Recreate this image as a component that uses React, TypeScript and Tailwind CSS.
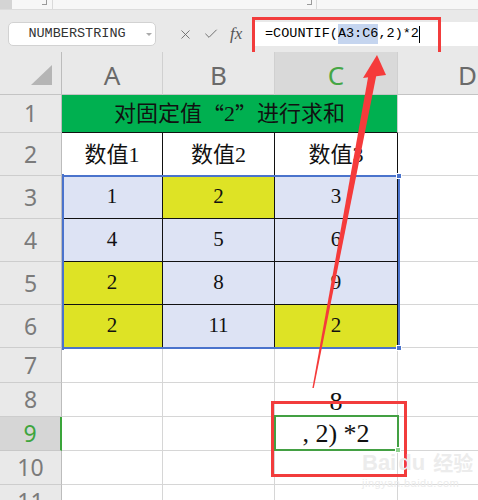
import React from 'react';
import { X, Check } from 'lucide-react';

const SERIF = "font-['Liberation_Serif','Noto_Sans_CJK_SC',serif]";
const MONO = "font-['Liberation_Mono','DejaVu_Sans_Mono',monospace]";

const BLUE = 'bg-[#dde3f4]';
const YELLOW = 'bg-[#dee325]';

// values for A3:C6
const BODY = [
  [
    { v: '1', bg: BLUE },
    { v: '2', bg: YELLOW },
    { v: '3', bg: BLUE },
  ],
  [
    { v: '4', bg: BLUE },
    { v: '5', bg: BLUE },
    { v: '6', bg: BLUE },
  ],
  [
    { v: '2', bg: YELLOW },
    { v: '8', bg: BLUE },
    { v: '9', bg: BLUE },
  ],
  [
    { v: '2', bg: YELLOW },
    { v: '11', bg: BLUE },
    { v: '2', bg: YELLOW },
  ],
];

const RowHead = ({ n, active }: { n: number; active?: boolean }) => (
  <div
    className={`flex items-center justify-center border-b text-[23px] font-['Noto_Sans',sans-serif] ${
      active
        ? 'bg-[#d6d6d6] text-[#3ea53e] border-r-2 border-r-[#3aa53a] border-b-[#c8c8c8]'
        : 'bg-[#e9e9e9] text-[#7b7b7b] border-r border-r-[#bcbcbc] border-b-[#cdcdcd]'
    }`}
  >
    {n}
  </div>
);

const Empty = () => <div className="bg-white border-r border-b border-[#d6d6d6]" />;

const ColHead = ({ label, active }: { label: string; active?: boolean }) => (
  <div
    className={`flex items-center justify-center pt-[5px] text-[26px] font-['Noto_Sans',sans-serif] border-r border-b border-r-[#d0d0d0] border-b-[#c4c4c4] ${
      active ? 'bg-[#d9d9d9] text-[#45a645]' : 'bg-[#e9e9e9] text-[#6a6a6a]'
    }`}
  >
    {label}
  </div>
);

const App = () => {
  return (
    <div className="relative w-[478px] h-[500px] overflow-hidden bg-[#e9e9e9]">
      {/* top strip */}
      <div className="relative h-[10px] bg-[#f7f7f7] border-b border-[#dcdcdc]">
        <div className="absolute left-0 top-0 w-[12px] h-[9px] bg-[#d4d4d4]" />
        <div className="absolute left-[42px] top-0 w-[5px] h-[5px] border-r border-b border-[#9a9a9a]" />
        <div className="absolute left-[52px] top-0 w-px h-[9px] bg-[#dadada]" />
        <div className="absolute left-[307px] top-0 w-[5px] h-[5px] border-r border-b border-[#9a9a9a]" />
        <div className="absolute left-[316px] top-0 w-px h-[9px] bg-[#dadada]" />
      </div>

      {/* formula bar */}
      <div className="relative h-[42px] flex items-start pt-[12px] bg-[#e9e9e9]">
        <div className="ml-[8px] w-[148px] h-[24px] bg-white border border-[#d2d2d2] rounded-[5px] flex items-center justify-center pr-[10px] relative">
          <span className={`${MONO} text-[13.5px] text-[#333]`}>NUMBERSTRING</span>
          <div className="absolute right-[3px] top-[10px] w-0 h-0 border-l-[3px] border-r-[3px] border-t-[3px] border-l-transparent border-r-transparent border-t-[#aaa]" />
        </div>
        <div className="w-[98px] h-[24px] flex items-center pl-[22px] text-[#666]">
          <X size={15} strokeWidth={1.4} />
          <Check size={16} strokeWidth={1.4} className="ml-[10px]" />
          <span className="ml-[11px] text-[17px] italic font-['Liberation_Serif',serif] text-[#555]">fx</span>
        </div>
        <div className={`flex-1 h-[24px] bg-white flex items-center pl-[11px] ${MONO} text-[13.5px] text-black`}>
          <span>=COUNTIF(</span>
          <span className="bg-[#c5d5ef]">A3:C6</span>
          <span>,2)*2</span>
          <span className="w-px h-[17px] bg-black" />
        </div>
        {/* red annotation around formula */}
        <div className="absolute left-[252px] top-[7px] w-[189px] h-[39px] border-[3px] border-[#f23c3c]" />
      </div>

      {/* sheet */}
      <div className="relative grid grid-cols-[62px_101px_112px_123px_140px] grid-rows-[43px_38px_43px_43px_43px_43px_43px_35px_34px_34px_34px_34px]">
        {/* column header */}
        <div className="bg-[#e9e9e9] border-r border-b border-r-[#bcbcbc] border-b-[#c4c4c4] flex items-end justify-end pr-[9px] pb-[9px]">
          <svg width="21" height="20" viewBox="0 0 21 20">
            <polygon points="21,0 21,20 0,20" fill="#b5b5b5" />
          </svg>
        </div>
        <ColHead label="A" />
        <ColHead label="B" />
        <ColHead label="C" active />
        <ColHead label="D" />

        {/* row 1 */}
        <RowHead n={1} />
        <div className={`col-span-3 bg-[#00b050] border-b border-b-[#111] border-r border-r-[#cfcfcf] flex items-center justify-center text-[22px] text-[#111] ${SERIF}`}>
          对固定值<span className="font-['Noto_Sans_CJK_SC',sans-serif]">“</span>2<span className="font-['Noto_Sans_CJK_SC',sans-serif]">”</span>进行求和
        </div>
        <Empty />

        {/* row 2 */}
        <RowHead n={2} />
        {['数值1', '数值2', '数值3'].map((t) => (
          <div
            key={t}
            className={`bg-white border-r border-b border-[#111] flex items-center justify-center text-[22px] text-[#111] ${SERIF}`}
          >
            {t}
          </div>
        ))}
        <Empty />

        {/* rows 3-6 */}
        {BODY.map((row, i) => (
          <React.Fragment key={i}>
            <RowHead n={i + 3} />
            {row.map((c, j) => (
              <div
                key={j}
                className={`${c.bg} border-r border-b border-[#111] flex items-center justify-center text-[21px] text-[#111] ${SERIF}`}
              >
                {c.v}
              </div>
            ))}
            <Empty />
          </React.Fragment>
        ))}

        {/* row 7 */}
        <RowHead n={7} />
        <Empty />
        <Empty />
        <Empty />
        <Empty />

        {/* row 8 */}
        <RowHead n={8} />
        <Empty />
        <Empty />
        <div className={`bg-white border-r border-b border-[#d6d6d6] flex items-center justify-center pt-[3px] text-[26px] text-[#111] ${SERIF}`}>
          8
        </div>
        <Empty />

        {/* row 9 */}
        <RowHead n={9} active />
        <Empty />
        <Empty />
        <div className={`bg-white border-r border-b border-[#d6d6d6] flex items-center justify-center text-[26px] text-[#111] whitespace-pre ${SERIF}`}>
          , 2) *2
        </div>
        <Empty />

        {/* rows 10-11 */}
        <RowHead n={10} />
        <Empty />
        <Empty />
        <Empty />
        <Empty />
        <RowHead n={11} />
        <Empty />
        <Empty />
        <Empty />
        <Empty />

        {/* selection A3:C6 */}
        <div className="absolute col-start-2 col-end-5 row-start-4 row-end-8 -top-px left-0 -right-[2px] -bottom-px border-2 border-[#4a73cc]">
          <div className="absolute -left-[2px] -top-[3px] w-[2px] h-[5px] bg-[#4a73cc]" />
          <div className="absolute -right-[4px] -top-[4px] w-[6px] h-[6px] bg-[#4a73cc] border border-white" />
          <div className="absolute -left-[2px] -bottom-[3px] w-[2px] h-[5px] bg-[#4a73cc]" />
          <div className="absolute -right-[4px] -bottom-[4px] w-[6px] h-[6px] bg-[#4a73cc] border border-white" />
        </div>

        {/* active cell C9 */}
        <div className="absolute col-start-4 col-end-5 row-start-10 row-end-11 -top-[2px] -left-px -right-px bottom-0 border-2 border-[#43a043]">
          <div className="absolute -right-[4px] -bottom-[4px] w-[6px] h-[6px] bg-[#8fd08f] border border-white" />
        </div>
      </div>

      {/* red annotation around result */}
      <div className="absolute left-[271px] top-[401px] w-[136px] h-[76px] border-[3px] border-[#f23c3c]" />

      {/* watermark */}
      <div className="absolute left-[362px] top-[452px] text-[#ececec] font-['Liberation_Sans','Noto_Sans_CJK_SC',sans-serif] pointer-events-none">
        <div className="flex items-end gap-[2px] leading-none">
          <span className="text-[22px] font-bold">Bai</span>
          <span className="text-[22px] font-bold">du</span>
          <span className="ml-[6px] text-[20px] font-bold">经验</span>
        </div>
        <div className="mt-[4px] text-[11px] leading-none tracking-[0.5px]">jingyan.baidu.com</div>
      </div>

      {/* arrow */}
      <svg className="absolute left-0 top-0 pointer-events-none" width="478" height="500" viewBox="0 0 478 500">
        <polygon points="369,72 377,72 313.8,388 312.4,388" fill="#f53b3b" />
        <polygon points="377,55 363,78 386,75" fill="#f53b3b" />
      </svg>
    </div>
  );
};

export default App;
